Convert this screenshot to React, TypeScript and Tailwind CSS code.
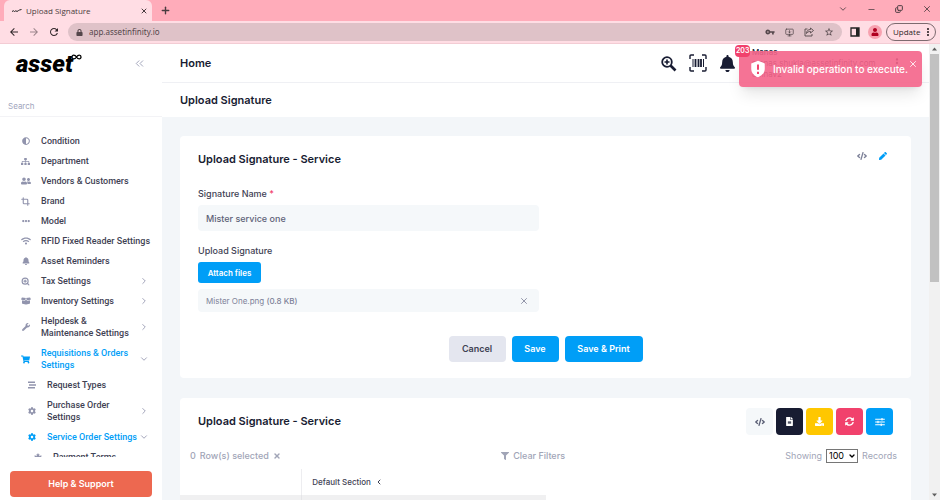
import type { ReactNode } from "react";
import {
  FaAdjust,
  FaBell,
  FaBoxOpen,
  FaCanadianMapleLeaf,
  FaCode,
  FaCog,
  FaDownload,
  FaEllipsisH,
  FaFileAlt,
  FaFilter,
  FaLock,
  FaPen,
  FaShoppingCart,
  FaSitemap,
  FaStream,
  FaSyncAlt,
  FaUser,
  FaUserFriends,
  FaWifi,
  FaWrench,
} from "react-icons/fa";
import {
  MdArrowBack,
  MdArrowForward,
  MdMoreVert,
  MdRefresh,
  MdStarBorder,
  MdVpnKey,
} from "react-icons/md";
import {
  ChevronDown,
  ChevronLeft,
  ChevronRight,
  ChevronsLeft,
  Copy,
  Crop,
  Minus,
  MonitorDown,
  Plus,
  X,
  ZoomIn,
} from "lucide-react";

type MenuItem = {
  label: string;
  icon: ReactNode;
  level?: number;
  active?: boolean;
  arrow?: "right" | "down";
};

const menu: MenuItem[] = [
  { label: "Condition", icon: <FaAdjust size={8} /> },
  { label: "Department", icon: <FaSitemap size={9} /> },
  { label: "Vendors & Customers", icon: <FaUserFriends size={10} /> },
  { label: "Brand", icon: <Crop size={9} strokeWidth={3} /> },
  { label: "Model", icon: <FaEllipsisH size={8} /> },
  { label: "RFID Fixed Reader Settings", icon: <FaWifi size={10} /> },
  { label: "Asset Reminders", icon: <FaBell size={8} /> },
  { label: "Tax Settings", icon: <ZoomIn size={9} strokeWidth={3} />, arrow: "right" },
  { label: "Inventory Settings", icon: <FaBoxOpen size={10} />, arrow: "right" },
  { label: "Helpdesk & Maintenance Settings", icon: <FaWrench size={8} />, arrow: "right" },
  { label: "Requisitions & Orders Settings", icon: <FaShoppingCart size={9} />, active: true, arrow: "down" },
  { label: "Request Types", icon: <FaStream size={8} />, level: 1 },
  { label: "Purchase Order Settings", icon: <FaCog size={8} />, level: 1, arrow: "right" },
  { label: "Service Order Settings", icon: <FaCog size={8} />, level: 1, active: true, arrow: "down" },
  { label: "Payment Terms", icon: <FaCanadianMapleLeaf size={8} />, level: 2 },
];

const indents = ["pl-5", "pl-[26px]", "pl-8"];

function ShareIcon() {
  return (
    <svg viewBox="0 0 20 20" className="size-[10px]" fill="none" stroke="currentColor" strokeWidth="1.800">
      <path d="M7 4H2v14h14v-4" />
      <path d="M13 2l6 5-6 5V9c-4 0-6 1-8 4 0-5 3-8 8-8z" strokeLinejoin="round" />
    </svg>
  );
}

function BrowserBar() {
  return (
    <header className="shrink-0 bg-[#ffacba] font-['Open_Sans',sans-serif] text-[#4a3c40]">
      <div className="flex h-[21px] items-end pl-1">
        <div className="flex h-[21px] w-[148px] items-center rounded-t-md bg-[#ffdde4] pr-1 pl-2">
          <svg viewBox="0 0 20 6" className="mr-1 h-1 w-[10px] shrink-0">
            <path d="M0 4q3-3 5 0q3-3 5 0q3-2 5-3l4-1" fill="none" stroke="#222" strokeWidth="2" />
          </svg>
          <span className="flex-1 text-[8px]">Upload Signature</span>
          <button aria-label="Close tab"><X size={8} strokeWidth={3} /></button>
        </div>
        <button aria-label="New tab" className="mb-[5px] ml-2"><Plus size={11} strokeWidth={3} /></button>
        <div className="mb-[7px] ml-auto flex items-center gap-[19px] pr-2">
          <button aria-label="Search tabs"><ChevronDown size={10} /></button>
          <button aria-label="Minimize"><Minus size={9} /></button>
          <button aria-label="Restore"><Copy size={8} strokeWidth={3} className="-scale-y-100" /></button>
          <button aria-label="Close window"><X size={10} /></button>
        </div>
      </div>
      <div className="flex h-[23px] items-center border-b border-[#f3ccd4] bg-[#ffdde4] pr-1 pl-2 text-[#302629]">
        <button aria-label="Back"><MdArrowBack size={12} /></button>
        <button aria-label="Forward" className="ml-2 text-[#9c858b]"><MdArrowForward size={12} /></button>
        <button aria-label="Reload" className="ml-2"><MdRefresh size={12} /></button>
        <div className="ml-2 flex h-[18px] flex-1 items-center rounded-full bg-[#dfc2c8] px-2 text-[#54474b]">
          <FaLock size={7} />
          <input
            aria-label="Address"
            defaultValue="app.assetinfinity.io"
            className="ml-[6px] min-w-0 flex-1 bg-transparent font-['Noto_Sans',sans-serif] text-[8px] outline-none"
          />
          <div className="flex items-center gap-[10px]">
            <MdVpnKey size={10} />
            <MonitorDown size={9} />
            <ShareIcon />
            <MdStarBorder size={10} />
          </div>
        </div>
        <svg viewBox="0 0 10 10" className="ml-2 size-[10px]">
          <path d="M1 1h8v8H1z" fill="none" stroke="#222" strokeWidth="1.3" />
          <path d="M6 1h3v8H6z" fill="#222" />
        </svg>
        <span className="ml-2 flex size-[14px] items-center justify-center rounded-full bg-[#f7a1af] text-[#b00020]">
          <FaUser size={8} />
        </span>
        <button className="ml-1 flex h-[18px] w-[50px] items-center justify-between rounded-full border border-[#7d6a6f] pr-px pl-[6px] text-[8px]">
          Update
          <MdMoreVert size={12} />
        </button>
      </div>
    </header>
  );
}

function Logo() {
  return (
    <div className="flex items-start text-black">
      <span className="font-[Roboto,sans-serif] text-[24px] leading-6 font-black italic">asset</span>
      <svg viewBox="0 0 22 12" className="mt-[2px] -ml-[2px] h-[6px] w-[11px]">
        <path
          d="M11 6C8 1 2 1 2 6s6 5 9 0 9-5 9 0-6 5-9 0z"
          fill="none"
          stroke="currentColor"
          strokeWidth="2.6"
        />
      </svg>
    </div>
  );
}

function Sidebar() {
  return (
    <aside className="flex w-[162px] shrink-0 flex-col bg-white">
      <div className="flex h-[39px] items-center justify-between px-4">
        <Logo />
        <button aria-label="Collapse menu" className="text-[#8f93ad]"><ChevronsLeft size={13} strokeWidth={1.5} /></button>
      </div>
      <input
        type="search"
        aria-label="Search"
        placeholder="Search"
        className="mt-3 h-[22px] shrink-0 border-b border-[#f3f3f6] px-2 text-[8px] outline-none placeholder:text-[#a1a5bd]"
      />
      <nav className="mt-[14px] min-h-0 flex-1 overflow-hidden font-[Roboto,sans-serif]">
        {menu.map((item) => (
          <a
            key={item.label}
            href="#"
            className={`flex items-center py-1 text-[9px] leading-3 font-medium ${indents[item.level ?? 0]} ${
              item.active ? "text-[#009ef7]" : "text-[#3f4254]"
            } ${item.arrow ? "pr-[13px]" : "pr-1"}`}
          >
            <span
              className={`mr-[10px] flex w-[11px] shrink-0 justify-center ${
                item.active ? "" : "text-[#9194ad]"
              }`}
            >
              {item.icon}
            </span>
            <span className="flex-1">{item.label}</span>
            {item.arrow === "right" && <ChevronRight size={10} strokeWidth={2} className="shrink-0 text-[#9194ad]" />}
            {item.arrow === "down" && <ChevronDown size={10} strokeWidth={2} className="shrink-0 text-[#9194ad]" />}
          </a>
        ))}
      </nav>
      <div className="px-[10px] pt-3 pb-[3px]">
        <button className="h-[26px] w-full rounded bg-[#ed6850] text-[9px] font-semibold text-white">
          Help &amp; Support
        </button>
      </div>
    </aside>
  );
}

function TopBar() {
  return (
    <div className="flex h-[39px] shrink-0 items-center border-b border-[#eff0f4] bg-white pr-[25px] pl-[18px] text-[#181c32]">
      <h1 className="flex-1 text-[11px] font-semibold">Home</h1>
      <div className="flex items-center gap-3">
        <button aria-label="Zoom search">
          <svg viewBox="0 0 17 17" className="size-[17px]" fill="none" stroke="currentColor">
            <circle cx="7" cy="7" r="4.800" strokeWidth="1.800" />
            <path d="M7 4.500v5M4.500 7h5" strokeWidth="1.600" />
            <path d="M10.500 10.500l5 5" strokeWidth="2.600" />
          </svg>
        </button>
        <button aria-label="Scan barcode">
          <svg viewBox="0 0 18 18" className="size-[18px]" fill="none" stroke="currentColor">
            <path d="M1 5V2q0-1 1-1h3M13 1h3q1 0 1 1v3M17 13v3q0 1-1 1h-3M5 17H2q-1 0-1-1v-3" strokeWidth="1.4" />
            <path d="M4 5v8M14.500 5v8" strokeWidth="1" />
            <path d="M6.500 5v8M9.500 5v8M12 5v8" strokeWidth="1.800" />
          </svg>
        </button>
        <button aria-label="Notifications" className="relative">
          <FaBell size={17} />
          <span className="absolute -top-[10px] left-4 z-20 rounded bg-[#f1416c] px-px text-[7px] leading-3 font-semibold text-white">
            203
          </span>
        </button>
      </div>
      <div className="ml-4 w-[138px] text-[8px] leading-[11px] whitespace-nowrap">
        <p className="font-medium">Manas</p>
        <p>manas.shukla@assetinfinity.com</p>
        <p>amnav2</p>
      </div>
      <MdMoreVert size={14} />
    </div>
  );
}

function ShieldIcon() {
  return (
    <svg viewBox="0 0 24 24" className="size-[18px] shrink-0">
      <path d="M12 1 3 4.500v7c0 5.500 3.800 9.600 9 11.500 5.200-1.900 9-6 9-11.500v-7z" fill="currentColor" />
      <path d="M12 6v7M12 15.500v3" stroke="#f1416c" strokeWidth="2.600" />
    </svg>
  );
}

function Toast() {
  return (
    <div
      role="alert"
      className="absolute top-[51px] right-[18px] z-10 flex h-9 w-[183px] items-center rounded bg-[#f4648a]/90 pr-2 pl-[10px] text-white shadow-lg"
    >
      <ShieldIcon />
      <span className="ml-[6px] flex-1 text-[10px] font-medium whitespace-nowrap">
        Invalid operation to execute.
      </span>
      <button aria-label="Dismiss" className="mb-[10px]"><X size={10} strokeWidth={2} /></button>
    </div>
  );
}

function SlidersIcon() {
  return (
    <svg viewBox="0 0 12 10" className="h-2 w-[10px]" stroke="currentColor" strokeWidth="1.400">
      <path d="M0 1.500h12M0 5h12M0 8.500h12M8.500 0v3M3.500 3.500v3M7.500 7v3" />
    </svg>
  );
}

function SignatureForm() {
  return (
    <form className="rounded bg-white px-[18px] pt-[14px] pb-4 text-[#3f4254]">
      <div className="flex items-center justify-between">
        <h3 className="text-[11px] leading-[18px] font-semibold text-[#181c32]">Upload Signature - Service</h3>
        <div className="mr-[6px] mb-[6px] flex items-center gap-3">
          <button type="button" aria-label="View code" className="text-[#7e8299]"><FaCode size={10} /></button>
          <button type="button" aria-label="Edit" className="text-[#009ef7]"><FaPen size={8} /></button>
        </div>
      </div>
      <label htmlFor="name" className="mt-5 block text-[9px] leading-3 font-medium">
        Signature Name <span className="text-[#f1416c]">*</span>
      </label>
      <input
        id="name"
        defaultValue="Mister service one"
        className="mt-[5px] block h-[26px] w-[49%] rounded bg-[#f5f8fa] px-2 text-[9px] font-medium text-[#5e6278] outline-none"
      />
      <p className="mt-[14px] text-[9px] leading-3 font-medium">Upload Signature</p>
      <button type="button" className="mt-[5px] block h-[21px] w-[63px] rounded-[3px] bg-[#009ef7] text-[8px] font-semibold text-white">
        Attach files
      </button>
      <div className="mt-[6px] flex h-[23px] w-[49%] items-center justify-between rounded bg-[#f5f8fa] px-2 text-[8px] text-[#7e8299]">
        <span>Mister One.png <span className="font-medium">(0.8 KB)</span></span>
        <button type="button" aria-label="Remove file" className="mr-[2px]"><X size={10} strokeWidth={2} /></button>
      </div>
      <div className="mt-6 flex justify-center gap-[6px] text-[9px] font-semibold">
        <button type="button" className="h-[26px] w-[57px] rounded bg-[#e4e6ef]">Cancel</button>
        <button type="button" className="h-[26px] w-[47px] rounded bg-[#009ef7] text-white">Save</button>
        <button type="button" className="h-[26px] w-[78px] rounded bg-[#009ef7] text-white">Save &amp; Print</button>
      </div>
    </form>
  );
}

function SignatureList() {
  const tool = "flex size-[27px] items-center justify-center rounded";
  return (
    <section className="mt-5 flex-1 overflow-hidden rounded-t bg-white">
      <div className="flex items-center justify-between px-[18px] pt-[10px]">
        <h3 className="text-[11px] font-semibold text-[#181c32]">Upload Signature - Service</h3>
        <div className="flex gap-[3px] text-white">
          <button aria-label="View code" className={`${tool} bg-[#f5f8fa] text-[#5e6278]`}><FaCode size={10} /></button>
          <button aria-label="Report" className={`${tool} bg-[#181c32]`}><FaFileAlt size={9} /></button>
          <button aria-label="Download" className={`${tool} bg-[#ffc700]`}><FaDownload size={9} /></button>
          <button aria-label="Refresh" className={`${tool} bg-[#f1416c]`}><FaSyncAlt size={9} /></button>
          <button aria-label="Settings" className={`${tool} bg-[#009ef7]`}><SlidersIcon /></button>
        </div>
      </div>
      <div className="mt-[14px] flex h-[14px] items-center justify-between pr-[14px] pl-[10px] text-[9px] text-[#a1a5b7]">
        <div className="flex items-center gap-1 font-medium">
          <span>0</span>
          <span>Row(s) selected</span>
          <button aria-label="Clear selection"><X size={8} strokeWidth={4} /></button>
        </div>
        <button className="flex items-center gap-1 font-medium"><FaFilter size={8} /> Clear Filters</button>
        <div className="flex items-center gap-1">
          <label htmlFor="size">Showing</label>
          <span className="relative flex items-center text-black">
            <select
              id="size"
              className="h-[14px] w-8 appearance-none border border-[#767676] pl-[2px] text-[9px] leading-3"
            >
              <option>100</option>
            </select>
            <ChevronDown size={8} strokeWidth={4} className="pointer-events-none absolute right-[2px]" />
          </span>
          <span>Records</span>
        </div>
      </div>
      <table className="mt-[6px] w-1/2 text-left text-[8px] text-[#3f4254]">
        <thead>
          <tr className="h-[26px]">
            <th className="w-1/3 border-r border-[#ededf0]" />
            <th className="pl-[10px] font-medium">
              <span className="flex items-center gap-1">Default Section <ChevronLeft size={8} strokeWidth={3} /></span>
            </th>
          </tr>
        </thead>
        <tbody>
          <tr className="h-5 bg-[#f0f0f1]">
            <td className="border-r border-[#e5e5e8]" />
            <td />
          </tr>
        </tbody>
      </table>
    </section>
  );
}

function Scrollbar() {
  return (
    <div className="flex w-[11px] shrink-0 flex-col items-center bg-[#f1f1f1] text-[#606060]">
      <svg viewBox="0 0 11 9" className="h-[10px] w-[11px]"><path d="M3 6h5L5.500 3z" fill="currentColor" /></svg>
      <div className="h-[50%] w-[9px] bg-[#c1c1c1]" />
      <svg viewBox="0 0 11 9" className="mt-auto h-[10px] w-[11px]"><path d="M3 3h5L5.500 6z" fill="currentColor" /></svg>
    </div>
  );
}

export default function App() {
  return (
    <div className="relative flex h-screen flex-col overflow-hidden font-[Inter,sans-serif]">
      <BrowserBar />
      <div className="flex min-h-0 flex-1">
        <Sidebar />
        <main className="flex min-w-0 flex-1 flex-col bg-[#f3f6f9]">
          <TopBar />
          <div className="flex h-[34px] shrink-0 items-center bg-white pl-[18px]">
            <h2 className="text-[11px] font-semibold text-[#181c32]">Upload Signature</h2>
          </div>
          <div className="flex min-h-0 flex-1 flex-col px-[18px] pt-[19px]">
            <SignatureForm />
            <SignatureList />
          </div>
        </main>
        <Scrollbar />
      </div>
      <Toast />
    </div>
  );
}
